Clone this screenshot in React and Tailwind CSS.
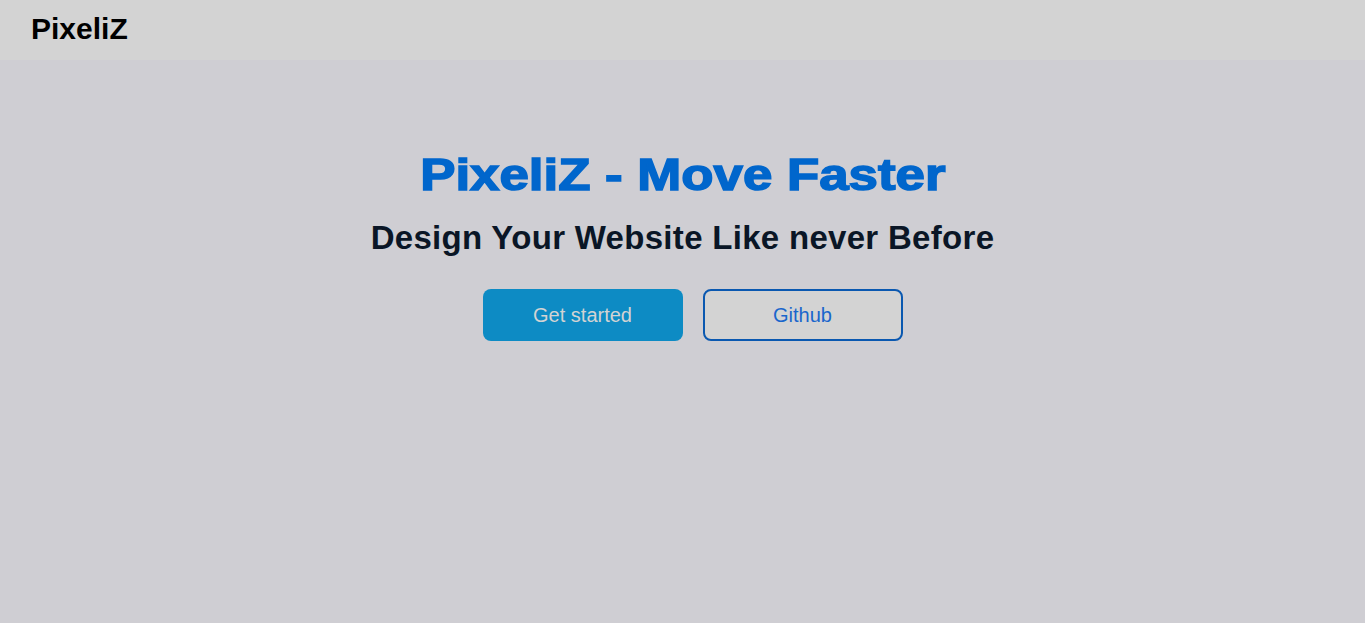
export default function App() {
  return (
    <div className="min-h-[623px] bg-[#cfced3] flex flex-col" style={{ fontFamily: '"Liberation Sans", Arial, sans-serif' }}>
      <header className="h-[60px] bg-[#d3d3d3] flex items-center px-[31px] pb-[2px]">
        <span className="text-[30px] font-bold text-black leading-none">PixeliZ</span>
      </header>
      <main className="flex flex-col items-center pt-[93px]">
        <h1 className="text-[44px] font-bold text-[#0066cc] leading-none scale-x-[1.2] [-webkit-text-stroke:1.5px_#0066cc]">PixeliZ - Move Faster</h1>
        <h2 className="mt-[24px] text-[33px] font-bold text-[#0a1626] leading-none tracking-[0.3px]">Design Your Website Like never Before</h2>
        <div className="mt-[35px] flex">
          <button className="ml-5 w-[200px] h-[52px] rounded-lg bg-[#0d8bc4] text-[#d3d3d3] text-[20px]">Get started</button>
          <button className="ml-5 w-[200px] h-[52px] rounded-lg bg-[#d3d3d3] border-2 border-[#0a58b0] text-[#1a66cc] text-[20px]">Github</button>
        </div>
      </main>
    </div>
  );
}
